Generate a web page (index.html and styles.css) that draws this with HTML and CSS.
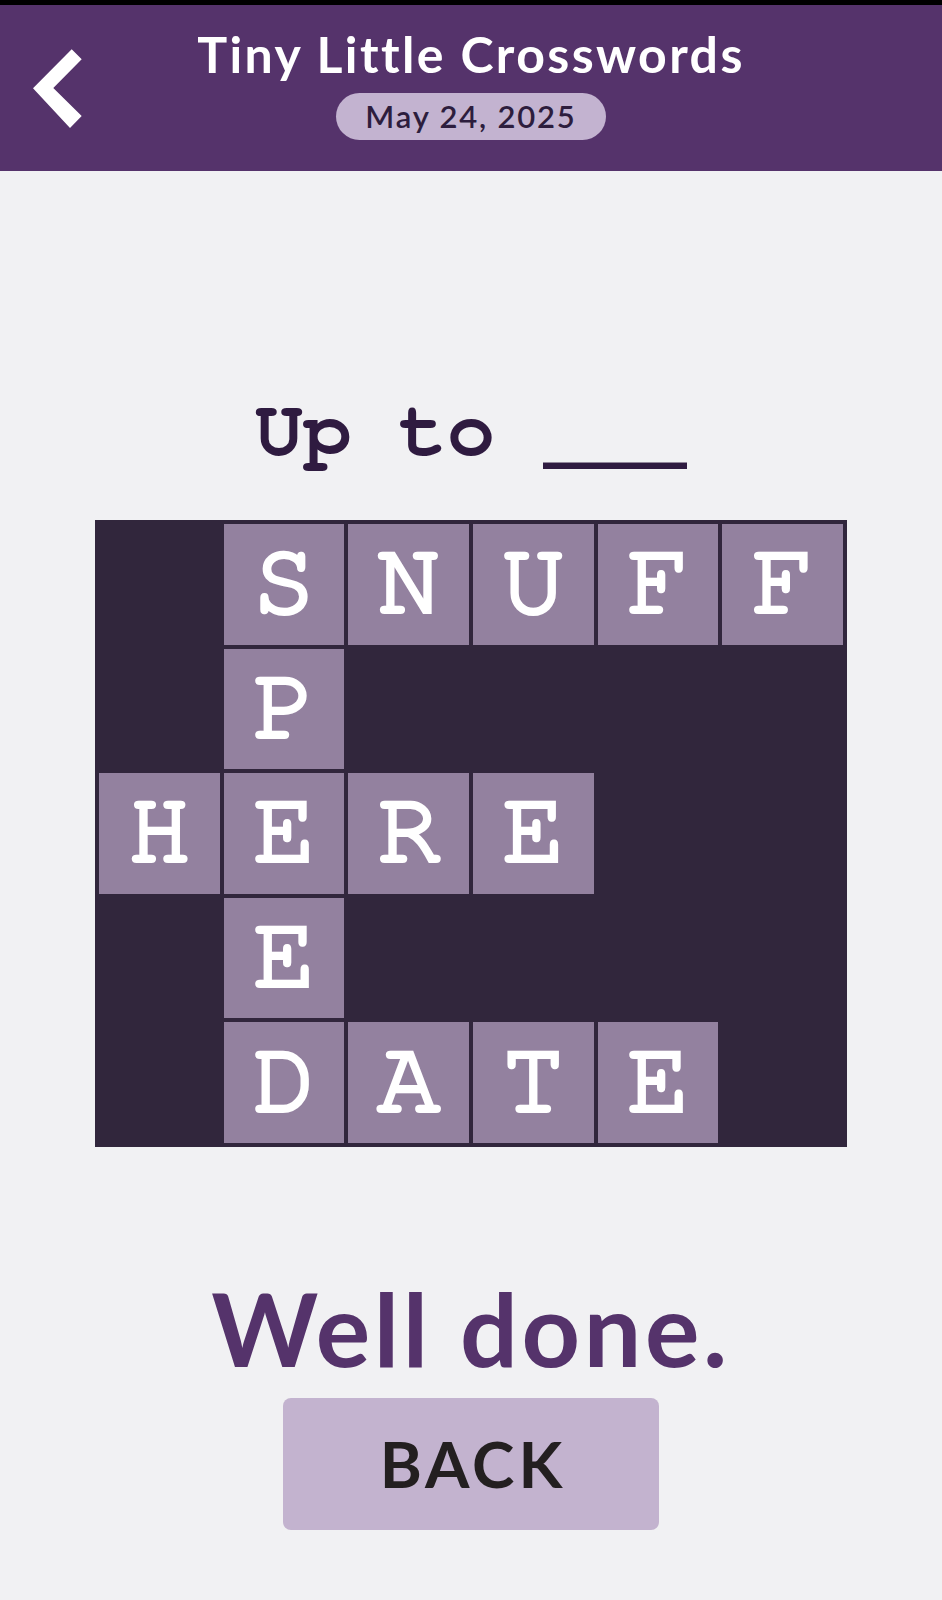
FILE: index.html
```html
<!DOCTYPE html>
<html>
  <head>
    <meta charset="UTF-8" />
    <title>Tiny Little Crosswords</title>
    <link rel="stylesheet" href="styles.css">
  </head>
  <body>
    <div class="statusbar"></div>
    <header class="topbar">
      <a href="#" class="back">
        <svg width="50" height="80" viewBox="0 0 50 80">
          <polygon points="38.7,0.3 48.7,10.3 20.3,39 48.7,67 37,79 0,39.3" fill="#fff" />
        </svg>
      </a>
      <div class="heading">
        <h1>Tiny Little Crosswords</h1>
        <span class="date">May 24, 2025</span>
      </div>
      <div></div>
    </header>
    <main class="puzzle">
      <p class="clue">Up to ___</p>
      <div class="board">
        <div class="cell"></div>
        <div class="cell on">S</div>
        <div class="cell on">N</div>
        <div class="cell on">U</div>
        <div class="cell on">F</div>
        <div class="cell on">F</div>

        <div class="cell"></div>
        <div class="cell on">P</div>
        <div class="cell"></div>
        <div class="cell"></div>
        <div class="cell"></div>
        <div class="cell"></div>

        <div class="cell on">H</div>
        <div class="cell on">E</div>
        <div class="cell on">R</div>
        <div class="cell on">E</div>
        <div class="cell"></div>
        <div class="cell"></div>

        <div class="cell"></div>
        <div class="cell on">E</div>
        <div class="cell"></div>
        <div class="cell"></div>
        <div class="cell"></div>
        <div class="cell"></div>

        <div class="cell"></div>
        <div class="cell on">D</div>
        <div class="cell on">A</div>
        <div class="cell on">T</div>
        <div class="cell on">E</div>
        <div class="cell"></div>
      </div>
      <p class="done">Well done.</p>
      <a href="#" class="btn">BACK</a>
    </main>
  </body>
</html>
```

FILE: styles.css
```css
* {
  margin: 0;
  padding: 0;
  box-sizing: border-box;
  text-decoration: none;
}
body {
  background: #f1f1f3;
  font-family: 'Lato', 'Noto Sans', sans-serif;
  height: 1600px;
}
.statusbar {
  height: 5px;
  background: #000;
}
.topbar {
  display: grid;
  grid-template-columns: 1fr auto 1fr;
  align-items: start;
  height: 166px;
  background: #55336b;
  padding: 0 33px;
}
.back {
  display: flex;
  margin-top: 44px;
}
.heading {
  display: flex;
  flex-direction: column;
  align-items: center;
  padding-top: 20px;
}
.heading h1 {
  color: #fff;
  font-size: 50px;
  font-weight: 700;
  line-height: 58px;
  letter-spacing: 2.4px;
}
.date {
  margin-top: 10px;
  width: 270px;
  height: 47px;
  line-height: 47px;
  border-radius: 24px;
  background: #c3b3d0;
  color: #2d1d3d;
  text-align: center;
  font-size: 31px;
  font-weight: 600;
  letter-spacing: 1.8px;
}
.puzzle {
  display: flex;
  flex-direction: column;
  align-items: center;
  padding-top: 212px;
}
.clue {
  font-family: 'Nimbus Mono PS', 'FreeMono', 'Liberation Mono', monospace;
  font-weight: 700;
  font-size: 80px;
  line-height: 96px;
  color: #2f1b40;
  white-space: pre;
}
.board {
  margin-top: 41px;
  width: 752px;
  display: grid;
  grid-template-columns: repeat(6, 1fr);
  gap: 4px;
  padding: 4px;
  background: #31263c;
}
.cell {
  height: 120.6px;
}
/* typewriter letters, thickened a little with a stroke */
.cell.on {
  display: flex;
  align-items: center;
  justify-content: center;
  padding-bottom: 6px;
  background: #93819f;
  color: #fff;
  font-family: 'Nimbus Mono PS', 'FreeMono', 'DejaVu Serif', serif;
  font-weight: 400;
  font-size: 104px;
  line-height: 1;
  -webkit-text-stroke: 4px #fff;
}
.done {
  margin-top: 121px;
  color: #55336b;
  font-size: 102px;
  font-weight: 700;
  line-height: 120px;
  letter-spacing: 3.6px;
}
.btn {
  margin-top: 10px;
  width: 376px;
  height: 132px;
  line-height: 132px;
  border-radius: 8px;
  background: #c3b3cf;
  color: #231f20;
  text-align: center;
  font-size: 64px;
  font-weight: 700;
  letter-spacing: 4px;
  text-indent: 4px;
}
```
